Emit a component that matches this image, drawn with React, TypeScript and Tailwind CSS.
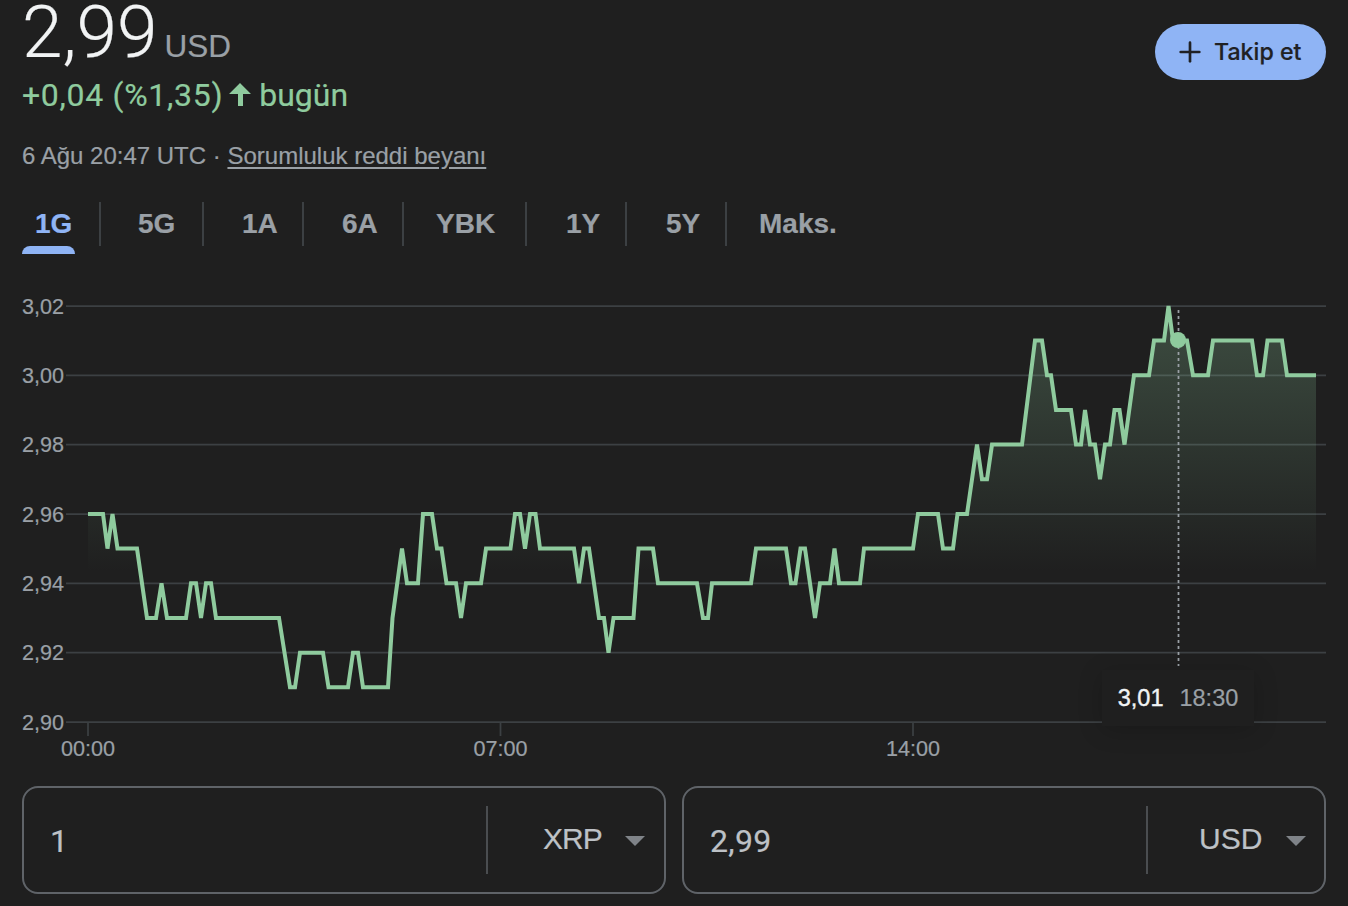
import React from 'react';
import { Plus } from 'lucide-react';

const LEVEL_PX = 34.67;
const BASE_Y = 722;

// [x, cents above 2,90]
const SERIES: [number, number][] = [
  [88, 6], [103, 6], [107.5, 5], [112.5, 6], [117.5, 5], [137, 5], [147, 3], [156, 3], [161.5, 4], [167, 3],
  [186, 3], [191, 4], [196, 4], [201, 3], [206, 4], [211, 4], [216, 3], [279, 3], [290, 1], [295, 1],
  [300, 2], [323, 2], [328.5, 1], [348, 1], [353, 2], [358, 2], [363, 1], [388, 1], [392.5, 3], [402, 5],
  [407, 4], [418, 4], [423, 6], [432, 6], [437, 5], [441.5, 5], [446.5, 4], [456, 4], [461, 3], [466, 4],
  [481, 4], [486, 5], [510.5, 5], [515, 6], [520, 6], [525, 5], [530, 6], [535.5, 6], [540, 5], [574, 5],
  [579, 4], [584, 5], [589, 5], [599, 3], [604, 3], [608.5, 2], [613.5, 3], [633.5, 3], [638.5, 5], [653, 5],
  [658, 4], [697, 4], [703, 3], [708, 3], [712, 4], [751, 4], [756, 5], [786, 5], [791, 4], [795.5, 4],
  [800.5, 5], [805, 5], [815, 3], [820, 4], [830, 4], [834.5, 5], [839, 4], [860, 4], [864, 5], [913, 5],
  [918, 6], [938, 6], [943, 5], [953, 5], [957.5, 6], [967, 6], [977, 8], [982, 7], [987, 7], [992, 8],
  [1022, 8], [1035, 11], [1042, 11], [1047, 10], [1051, 10], [1056, 9], [1071, 9], [1076, 8], [1081, 8], [1085, 9],
  [1090, 8], [1095, 8], [1100, 7], [1105, 8], [1110, 8], [1114.5, 9], [1119.5, 9], [1124.5, 8], [1134, 10], [1149, 10],
  [1154, 11], [1164, 11], [1168.5, 12], [1173, 11], [1187, 11], [1193, 10], [1208, 10], [1213, 11], [1252, 11], [1257, 10],
  [1263, 10], [1267.5, 11], [1282, 11], [1287, 10], [1316, 10],
];

const linePoints = SERIES.map(([x, l]) => `${x},${(BASE_Y - l * LEVEL_PX).toFixed(1)}`).join(' ');
const areaPoints = `88,${BASE_Y} ${linePoints} 1316,${BASE_Y}`;

const Y_TICKS = [
  { label: '3,02', y: 306 },
  { label: '3,00', y: 375.3 },
  { label: '2,98', y: 444.7 },
  { label: '2,96', y: 514 },
  { label: '2,94', y: 583.3 },
  { label: '2,92', y: 652.7 },
  { label: '2,90', y: 722 },
];

const X_TICKS = [
  { label: '00:00', x: 88 },
  { label: '07:00', x: 500.5 },
  { label: '14:00', x: 913 },
];

const TABS = [
  { label: '1G', cell: 'w-[78px] pl-[13px] text-[#8fb4f5]' },
  { label: '5G', cell: 'w-[103px] pl-[38px] text-[#9aa0a6]' },
  { label: '1A', cell: 'w-[100px] pl-[39px] text-[#9aa0a6]' },
  { label: '6A', cell: 'w-[100px] pl-[39px] text-[#9aa0a6]' },
  { label: 'YBK', cell: 'w-[123px] pl-[33px] text-[#9aa0a6]' },
  { label: '1Y', cell: 'w-[100px] pl-[40px] text-[#9aa0a6]' },
  { label: '5Y', cell: 'w-[100px] pl-[40px] text-[#9aa0a6]' },
  { label: 'Maks.', cell: 'w-[120px] pl-[33px] text-[#9aa0a6]' },
];

const PriceChart: React.FC = () => (
  <div className="relative h-[480px] w-[1304px] mt-[36px]">
    <svg width="1304" height="480" viewBox="22 290 1304 480" className="block">
      <defs>
        <linearGradient id="area" gradientUnits="userSpaceOnUse" x1="0" y1="306" x2="0" y2="572">
          <stop offset="0" stopColor="#8fcb9e" stopOpacity="0.27" />
          <stop offset="1" stopColor="#8fcb9e" stopOpacity="0" />
        </linearGradient>
      </defs>

      {Y_TICKS.map((t) => (
        <g key={t.label}>
          <line x1="66" x2="1326" y1={t.y} y2={t.y} stroke="#3c4043" strokeWidth="1.75" />
          <text x="22" y={t.y + 7.5} fontSize="21.6" fill="#9aa0a6" stroke="#9aa0a6" strokeWidth="0.2" fontFamily="'Liberation Sans', sans-serif">
            {t.label}
          </text>
        </g>
      ))}

      {X_TICKS.map((t) => (
        <g key={t.label}>
          <line x1={t.x} x2={t.x} y1="722" y2="736" stroke="#3c4043" strokeWidth="1.75" />
          <text x={t.x} y="756" textAnchor="middle" fontSize="21.6" fill="#9aa0a6" stroke="#9aa0a6" strokeWidth="0.2" fontFamily="'Liberation Sans', sans-serif">
            {t.label}
          </text>
        </g>
      ))}

      <polygon points={areaPoints} fill="url(#area)" />
      <polyline points={linePoints} fill="none" stroke="#8fcb9e" strokeWidth="4" strokeLinejoin="miter" />

      <line x1="1178.5" x2="1178.5" y1="310" y2="666" stroke="#9aa0a6" strokeWidth="1.75" strokeDasharray="3 3" />
      <circle cx="1178" cy="340" r="8" fill="#8fcb9e" />
    </svg>

    {/* Hover tooltip */}
    <div className="absolute left-[1080px] top-[380px] flex h-[56px] w-[152px] items-center justify-center gap-[16px] bg-[#1f1f1f] pt-[2px] text-[23.5px] shadow-[0_4px_24px_rgba(0,0,0,0.18)]">
      <span className="text-[#f1f3f4] [-webkit-text-stroke:0.4px]">3,01</span>
      <span className="text-[#9aa0a6]">18:30</span>
    </div>
  </div>
);

const ConverterBox: React.FC<{ value: string; unit: string; unitClass: string }> = ({ value, unit, unitClass }) => (
  <div className="flex h-[108px] flex-1 items-center rounded-[16px] border-2 border-[#5f6368]">
    <div className="flex-1 pl-[26px] pt-[2px] font-['Roboto',sans-serif] text-[32px] text-[#bdc1c6] [letter-spacing:0.3px]">{value}</div>
    <div className="h-[68px] w-[2px] bg-[#4a4d50]" />
    <div className="flex w-[176px] items-center text-[30px] text-[#bdc1c6]">
      <span className={`mb-[3px] ${unitClass}`}>{unit}</span>
      <svg width="20" height="10" viewBox="0 0 20 10" className="mt-[2px]">
        <path d="M0 0H20L10 10Z" fill="#7f8388" />
      </svg>
    </div>
  </div>
);

export default function App() {
  return (
    <div className="h-[906px] w-[1348px] overflow-hidden bg-[#1f1f1f] px-[22px] font-['Liberation_Sans',sans-serif] [-webkit-text-stroke:0.2px]">
      {/* Price header */}
      <div className="flex items-start justify-between">
        <div>
          <div className="flex h-[66px] items-baseline">
            <span className="font-['Roboto',sans-serif] text-[73px] font-[350] leading-[64px] text-[#f1f3f4]">2,99</span>
            <span className="ml-[7px] text-[31.5px] leading-[66px] text-[#9aa0a6]">USD</span>
          </div>
          <div className="mt-[7px] flex h-[44px] items-center font-['Roboto',sans-serif] text-[32px] text-[#8fcb9e]">
            <span className="[letter-spacing:0.7px]">+0,04 (%1,35)</span>
            <svg width="24" height="24" viewBox="0 0 24 24" className="ml-[5px] mr-[7px] mb-[3px]">
              <path d="M12 1 L23 12 H15 V24 H10 V12 H1 Z" fill="#8fcb9e" />
            </svg>
            <span>bugün</span>
          </div>
        </div>
        <button className="mt-[24px] flex h-[56px] w-[171px] items-center rounded-full bg-[#8fb4f5] pl-[19px] text-[#202124]">
          <Plus size={32} strokeWidth={2} />
          <span className="ml-[8px] font-['Inter',sans-serif] text-[23.2px] font-medium">Takip et</span>
        </button>
      </div>

      {/* Timestamp */}
      <div className="mt-[23px] text-[24px] leading-[32px] text-[#9aa0a6]">
        6 Ağu 20:47 UTC · <span className="underline underline-offset-[3px]">Sorumluluk reddi beyanı</span>
      </div>

      {/* Range tabs */}
      <div className="mt-[30px] flex h-[52px] items-start">
        {TABS.map((tab, i) => (
          <div key={tab.label} className={`relative flex h-[44px] items-center text-[28px] font-bold ${tab.cell}`}>
            {tab.label}
            {i < TABS.length - 1 && <div className="absolute right-[-1px] top-0 h-[44px] w-[2px] bg-[#3c4043]" />}
            {i === 0 && <div className="absolute left-0 top-[44px] h-[8px] w-[53px] rounded-t-[8px] bg-[#8fb4f5]" />}
          </div>
        ))}
      </div>

      <PriceChart />

      {/* Converter */}
      <div className="mt-[16px] flex gap-[16px]">
        <ConverterBox value="1" unit="XRP" unitClass="ml-[55px] mr-[23px] tracking-[-1px]" />
        <ConverterBox value="2,99" unit="USD" unitClass="ml-[51px] mr-[24px]" />
      </div>
    </div>
  );
}
